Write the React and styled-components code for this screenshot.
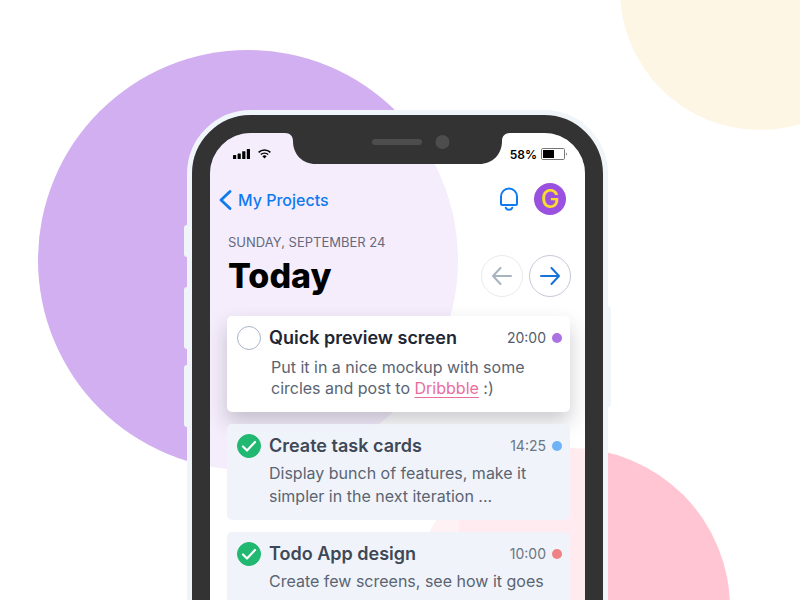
import React from "react";
import styled, { createGlobalStyle } from "styled-components";

const GlobalStyle = createGlobalStyle`
  *, *::before, *::after { box-sizing: border-box; }
  body {
    margin: 0;
    background: #fff;
    font-family: Inter, "Liberation Sans", sans-serif;
    -webkit-font-smoothing: antialiased;
  }
  button { font: inherit; }
`;

const Page = styled.main`
  position: relative;
  display: flex;
  justify-content: center;
  height: 100vh;
  padding: 110px 5px 0 0;
  overflow: hidden;
`;

const Circle = styled.div`
  position: absolute;
  width: ${(p) => p.$size}px;
  height: ${(p) => p.$size}px;
  left: ${(p) => p.$left}px;
  top: ${(p) => p.$top}px;
  border-radius: 50%;
  background: ${(p) => p.$color};
`;

const Phone = styled.div`
  position: relative;
  flex: none;
  align-self: flex-start;
  width: 421px;
  border: 5px solid #f0f5fa;
  border-radius: 64px;
`;

const SideButton = styled.span`
  position: absolute;
  ${(p) => (p.$right ? "right: -8px" : "left: -8px")};
  top: ${(p) => p.$top}px;
  width: 3px;
  height: ${(p) => p.$height}px;
  border-radius: ${(p) => (p.$right ? "0 3px 3px 0" : "3px 0 0 3px")};
  background: #f0f5fa;
`;

const Bezel = styled.div`
  position: relative;
  border: 18px solid #333;
  border-radius: 59px;
`;

const Screen = styled.div`
  min-height: 740px;
  padding: 0 15px 40px 17px;
  border-radius: 41px;
  background: linear-gradient(90deg, rgba(255, 255, 255, 0.78) 248px, rgba(255, 255, 255, 0.66) 250px);
`;

const Notch = styled.svg`
  position: absolute;
  top: -1px;
  left: 75px;
  width: 225px;
  height: 32px;
`;

const StatusBar = styled.div`
  display: flex;
  justify-content: space-between;
  align-items: center;
  height: 42px;
  padding: 0 3px 0 6px;
  color: #000;
  font-size: 12px;
  font-weight: 600;
`;

const StatusGroup = styled.div`
  display: flex;
  align-items: center;
  gap: ${(p) => p.$gap}px;
`;

const NavBar = styled.nav`
  display: flex;
  align-items: center;
  justify-content: space-between;
  height: 48px;
  margin-left: -8px;
  padding-right: 4px;
`;

const BackLink = styled.a`
  display: flex;
  align-items: center;
  gap: 6px;
  padding-top: 2px;
  color: #0f7af0;
  font-size: 16px;
  font-weight: 500;
  text-decoration: none;
`;

const NavActions = styled.div`
  display: flex;
  align-items: center;
  gap: 15px;
`;

const IconButton = styled.button`
  display: flex;
  padding: 0;
  border: 0;
  background: none;
  color: #0f7af0;
`;

const Avatar = styled.button`
  width: 32px;
  height: 32px;
  padding: 0;
  border: 0;
  border-radius: 50%;
  background: #9b51e0;
  color: #fbdc2c;
  font-size: 25px;
  font-weight: 500;
  line-height: 32px;
  text-align: center;
`;

const Header = styled.header`
  padding: 11px 0 19px 1px;
`;

const DateLine = styled.p`
  margin: 0;
  color: #646a7c;
  font-size: 13px;
  line-height: 16px;
`;

const TitleRow = styled.div`
  display: flex;
  align-items: center;
  justify-content: space-between;
  margin: 5px -1px 0 0;
`;

const Title = styled.h1`
  margin: 0;
  color: #000;
  font-size: 34px;
  font-weight: 800;
  line-height: 42px;
`;

const DayButtons = styled.div`
  display: flex;
  gap: 6px;
`;

const DayButton = styled.button`
  display: flex;
  align-items: center;
  justify-content: center;
  width: 42px;
  height: 42px;
  padding: 0;
  border: 1px solid #c5cad8;
  border-radius: 50%;
  background: none;
  color: #1873d8;
  &:disabled {
    border-color: #e9ebef;
    color: #a8b3c0;
  }
`;

const TaskList = styled.ul`
  display: flex;
  flex-direction: column;
  gap: 12px;
  margin: 0;
  padding: 0;
  list-style: none;
`;

const Card = styled.li`
  min-height: 96px;
  padding: 10px 8px 10px 10px;
  border-radius: 5px;
  background: ${(p) => (p.$done ? "rgba(239, 243, 250, 0.93)" : "#fff")};
  box-shadow: ${(p) => (p.$done ? "none" : "0 10px 20px rgba(40, 40, 60, 0.24)")};
`;

const CardHead = styled.div`
  display: flex;
  align-items: center;
  height: 24px;
`;

const TaskLabel = styled.label`
  display: flex;
  flex: 1;
  align-items: center;
  gap: 8px;
  color: ${(p) => (p.$done ? "#3e4857" : "#1e2733")};
  font-size: 18px;
  font-weight: 600;
  line-height: 22px;
`;

const CheckBox = styled.span`
  display: grid;
  width: 24px;
  height: 24px;
  & > * { grid-area: 1 / 1; }
  svg { pointer-events: none; }
`;

const CheckInput = styled.input`
  appearance: none;
  width: 24px;
  height: 24px;
  margin: 0;
  border: 1px solid #a9b5c8;
  border-radius: 50%;
  background: #fff;
  &:checked {
    border-color: #21b872;
    background: #21b872;
  }
`;

const Time = styled.time`
  color: ${(p) => (p.$done ? "#6c7583" : "#525d6b")};
  font-size: 14px;
  line-height: 18px;
`;

const Dot = styled.span`
  width: 10px;
  height: 10px;
  margin-left: 6px;
  border-radius: 50%;
  background: ${(p) => p.$color};
`;

const Note = styled.p`
  margin: ${(p) => (p.$done ? "4px 0 0 32px" : "7px 0 0 34px")};
  color: #5a6472;
  font-size: 16px;
  line-height: ${(p) => (p.$done ? 23 : 21)}px;
`;

const PinkLink = styled.a`
  color: #ea6d9c;
  text-decoration: underline 1px #ea6d9c;
  text-decoration-skip-ink: none;
  text-underline-offset: 3px;
`;

const SignalIcon = () => (
  <svg width="17" height="10" viewBox="0 0 17 10" fill="currentColor" aria-hidden="true">
    <rect x="0" y="6" width="3.2" height="4" rx=".5" />
    <rect x="4.6" y="4.5" width="3.2" height="5.5" rx=".5" />
    <rect x="9.2" y="2.2" width="3.2" height="7.8" rx=".5" />
    <rect x="13.8" y="0" width="3.2" height="10" rx=".5" />
  </svg>
);

const WifiIcon = () => (
  <svg width="13" height="10" viewBox="0 0 13 10" fill="none" stroke="currentColor" aria-hidden="true">
    <path d="M.6 3.4a8.4 8.4 0 0 1 11.8 0" strokeWidth="1.5" />
    <path d="M2.8 5.6a5.3 5.3 0 0 1 7.4 0" strokeWidth="1.4" />
    <path d="M6.5 9.4 4.4 7.2a3 3 0 0 1 4.2 0z" fill="currentColor" stroke="none" />
  </svg>
);

const BatteryIcon = () => (
  <svg width="26" height="12" viewBox="0 0 26 12" aria-hidden="true">
    <rect x=".5" y=".5" width="23" height="11" rx="1.2" fill="#fff" stroke="#777" />
    <rect x="2" y="2" width="11" height="8" fill="#000" />
    <path d="M25 4.5c.9.7.9 2.3 0 3z" fill="#333" />
  </svg>
);

const BellIcon = () => (
  <svg width="20" height="24" viewBox="0 0 20 24" fill="none" stroke="currentColor" strokeWidth="2" strokeLinecap="round" strokeLinejoin="round" aria-hidden="true">
    <path d="M2 16.5v-7a8 8 0 0 1 16 0v7a1.5 1.5 0 0 1-1.5 1.5h-13A1.5 1.5 0 0 1 2 16.5z" />
    <path d="M6.8 20.8c1 2.6 5.4 2.6 6.4 0" />
  </svg>
);

const ChevronIcon = () => (
  <svg width="13" height="20" viewBox="0 0 13 20" fill="none" stroke="currentColor" strokeWidth="2.8" strokeLinecap="round" strokeLinejoin="round" aria-hidden="true">
    <path d="M11 1.5 2 10l9 8.5" />
  </svg>
);

const ArrowIcon = ({ back }) => (
  <svg width="20" height="18" viewBox="0 0 20 18" fill="none" stroke="currentColor" strokeWidth="2" strokeLinejoin="round" strokeLinecap="round" aria-hidden="true">
    <path d={back ? "M19 9H1M8.5 1 1 9l7.5 8" : "M1 9h18M11.5 1 19 9l-7.5 8"} />
  </svg>
);

const CheckIcon = () => (
  <svg width="24" height="24" viewBox="0 0 24 24" fill="none" stroke="#fff" strokeWidth="2.2" strokeLinecap="round" strokeLinejoin="round" aria-hidden="true">
    <path d="m6 12.5 4 4L18 8" />
  </svg>
);

const tasks = [
  {
    id: "preview",
    title: "Quick preview screen",
    time: "20:00",
    color: "#ab72e2",
    done: false,
    note: (
      <>
        Put it in a nice mockup with some circles and post to{" "}
        <PinkLink href="#dribbble">Dribbble</PinkLink> :)
      </>
    ),
  },
  {
    id: "cards",
    title: "Create task cards",
    time: "14:25",
    color: "#6eb2f8",
    done: true,
    note: "Display bunch of features, make it simpler in the next iteration ...",
  },
  {
    id: "todo",
    title: "Todo App design",
    time: "10:00",
    color: "#ee8285",
    done: true,
    note: "Create few screens, see how it goes",
  },
];

const Task = ({ task }) => (
  <Card $done={task.done}>
    <CardHead>
      <TaskLabel htmlFor={task.id} $done={task.done}>
        <CheckBox>
          <CheckInput type="checkbox" id={task.id} defaultChecked={task.done} />
          {task.done && <CheckIcon />}
        </CheckBox>
        {task.title}
      </TaskLabel>
      <Time $done={task.done}>{task.time}</Time>
      <Dot $color={task.color} />
    </CardHead>
    <Note $done={task.done}>{task.note}</Note>
  </Card>
);

export default function App() {
  return (
    <>
      <GlobalStyle />
      <Page>
        <Circle $size={420} $left={38} $top={50} $color="#d1aff0" />
        <Circle $size={280} $left={620} $top={-150} $color="#fef6e4" />
        <Circle $size={320} $left={410} $top={448} $color="#ffc5d2" />
        <Phone>
          <SideButton $top={110} $height={32} />
          <SideButton $top={172} $height={62} />
          <SideButton $top={250} $height={62} />
          <SideButton $right $top={191} $height={101} />
          <Bezel>
            <Notch viewBox="0 0 225 32" aria-hidden="true">
              <path d="M0 0h225v1c-5 0-8 3-8 8 0 13-9 23-23 23H31C17 32 8 22 8 9c0-5-3-8-8-8z" fill="#333" />
              <rect x="87" y="7" width="50" height="6" rx="3" fill="#4d4d4d" />
              <circle cx="157.5" cy="10" r="7" fill="#4d4d4d" />
            </Notch>
            <Screen>
              <StatusBar>
                <StatusGroup $gap={8}>
                  <SignalIcon />
                  <WifiIcon />
                </StatusGroup>
                <StatusGroup $gap={4}>
                  58%
                  <BatteryIcon />
                </StatusGroup>
              </StatusBar>
              <NavBar>
                <BackLink href="#projects">
                  <ChevronIcon />
                  My Projects
                </BackLink>
                <NavActions>
                  <IconButton aria-label="Notifications">
                    <BellIcon />
                  </IconButton>
                  <Avatar aria-label="Account G">G</Avatar>
                </NavActions>
              </NavBar>
              <Header>
                <DateLine>SUNDAY, SEPTEMBER 24</DateLine>
                <TitleRow>
                  <Title>Today</Title>
                  <DayButtons>
                    <DayButton disabled aria-label="Previous day">
                      <ArrowIcon back />
                    </DayButton>
                    <DayButton aria-label="Next day">
                      <ArrowIcon />
                    </DayButton>
                  </DayButtons>
                </TitleRow>
              </Header>
              <TaskList>
                {tasks.map((task) => (
                  <Task key={task.id} task={task} />
                ))}
              </TaskList>
            </Screen>
          </Bezel>
        </Phone>
      </Page>
    </>
  );
}
